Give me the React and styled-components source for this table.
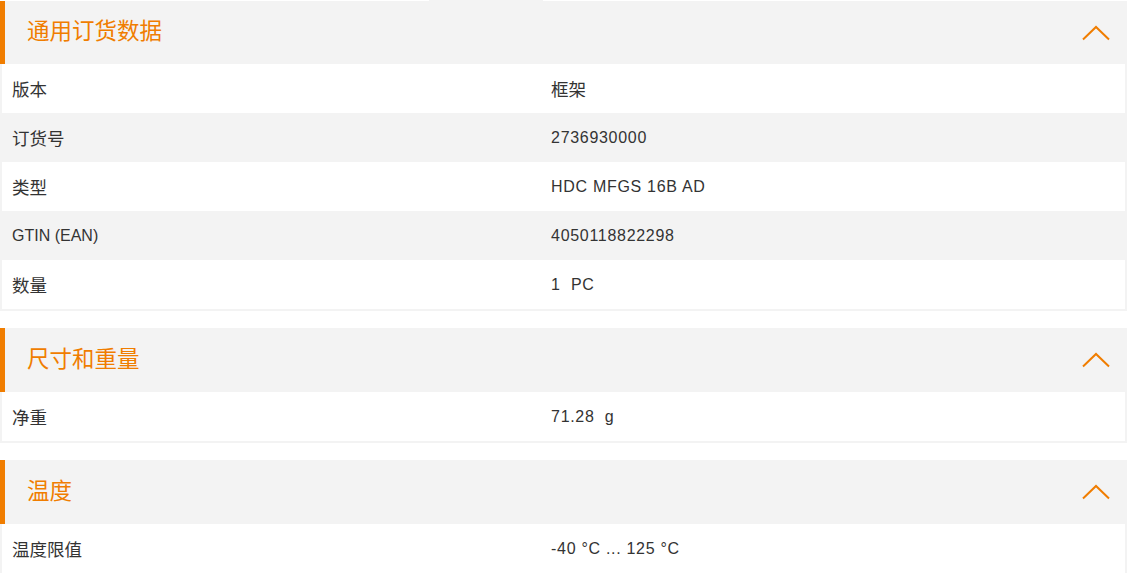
import styled, { createGlobalStyle } from 'styled-components';

const GlobalStyle = createGlobalStyle`
    html, body {
        margin: 0;
        padding: 0;
        background: #ffffff;
    }
    body {
        font-family: "Liberation Sans", Arial, "Noto Sans CJK SC", sans-serif;
        color: #333333;
    }
`;

const Page = styled.div`
    width: 1127px;
    display: flex;
    flex-direction: column;
    gap: 17px;
`;

const TopEdge = styled.div`
    height: 1px;
    display: flex;

    span {
        margin-left: 429px;
        width: 114px;
        background: #f3f3f3;
    }
`;

const Section = styled.section`
    display: flex;
    flex-direction: column;
`;

const Header = styled.div`
    height: ${p => (p.$first ? '63px' : '64px')};
    display: flex;
    align-items: center;
    justify-content: space-between;
    background: #f3f3f3;
    border-left: 5px solid #f07d00;
    padding: 0 17px 0 22px;
    cursor: pointer;
`;

const Title = styled.h2`
    margin: 0 0 6px;
    font-family: "Noto Sans CJK SC", sans-serif;
    font-size: 22.5px;
    font-weight: 400;
    color: #f07d00;
    line-height: 1;
`;

const Table = styled.div`
    border: 2px solid #f3f3f3;
    border-top: none;
`;

const Row = styled.div`
    display: grid;
    grid-template-columns: 48% 52%;
    height: 49px;
    align-items: center;
    background: ${p => (p.$shaded ? '#f3f3f3' : '#ffffff')};
`;

const Cell = styled.div`
    padding: 0 10px;
    font-size: ${p => (p.$cjk ? '17.5px' : '16px')};
    color: #333333;
    white-space: pre;
`;

const Value = styled(Cell)`
    letter-spacing: ${p => (p.$cjk ? '0' : '0.7px')};
`;

const Chevron = () => (
    <svg width="28" height="16" viewBox="0 0 28 16" fill="none">
        <polyline points="1,14.5 14,2 27,14.5" stroke="#f07d00" strokeWidth="2" />
    </svg>
);

const isCjk = text => /[\u4e00-\u9fff]/.test(text);

const sections = [
    {
        title: '通用订货数据',
        rows: [
            ['版本', '框架'],
            ['订货号', '2736930000'],
            ['类型', 'HDC MFGS 16B AD'],
            ['GTIN (EAN)', '4050118822298'],
            ['数量', '1  PC'],
        ],
    },
    {
        title: '尺寸和重量',
        rows: [['净重', '71.28  g']],
    },
    {
        title: '温度',
        rows: [['温度限值', '-40 °C ... 125 °C']],
    },
];

const App = () => {
    return (
        <>
            <GlobalStyle/>
            <Page>
                {sections.map((s, i) => (
                    <Section key={s.title}>
                        {i === 0 && <TopEdge><span/></TopEdge>}
                        <Header $first={i === 0}>
                            <Title>{s.title}</Title>
                            <Chevron/>
                        </Header>
                        <Table>
                            {s.rows.map(([label, value], r) => (
                                <Row key={label} $shaded={r % 2 === 1}>
                                    <Cell $cjk={isCjk(label)}>{label}</Cell>
                                    <Value $cjk={isCjk(value)}>{value}</Value>
                                </Row>
                            ))}
                        </Table>
                    </Section>
                ))}
            </Page>
        </>
    );
};

export default App;
